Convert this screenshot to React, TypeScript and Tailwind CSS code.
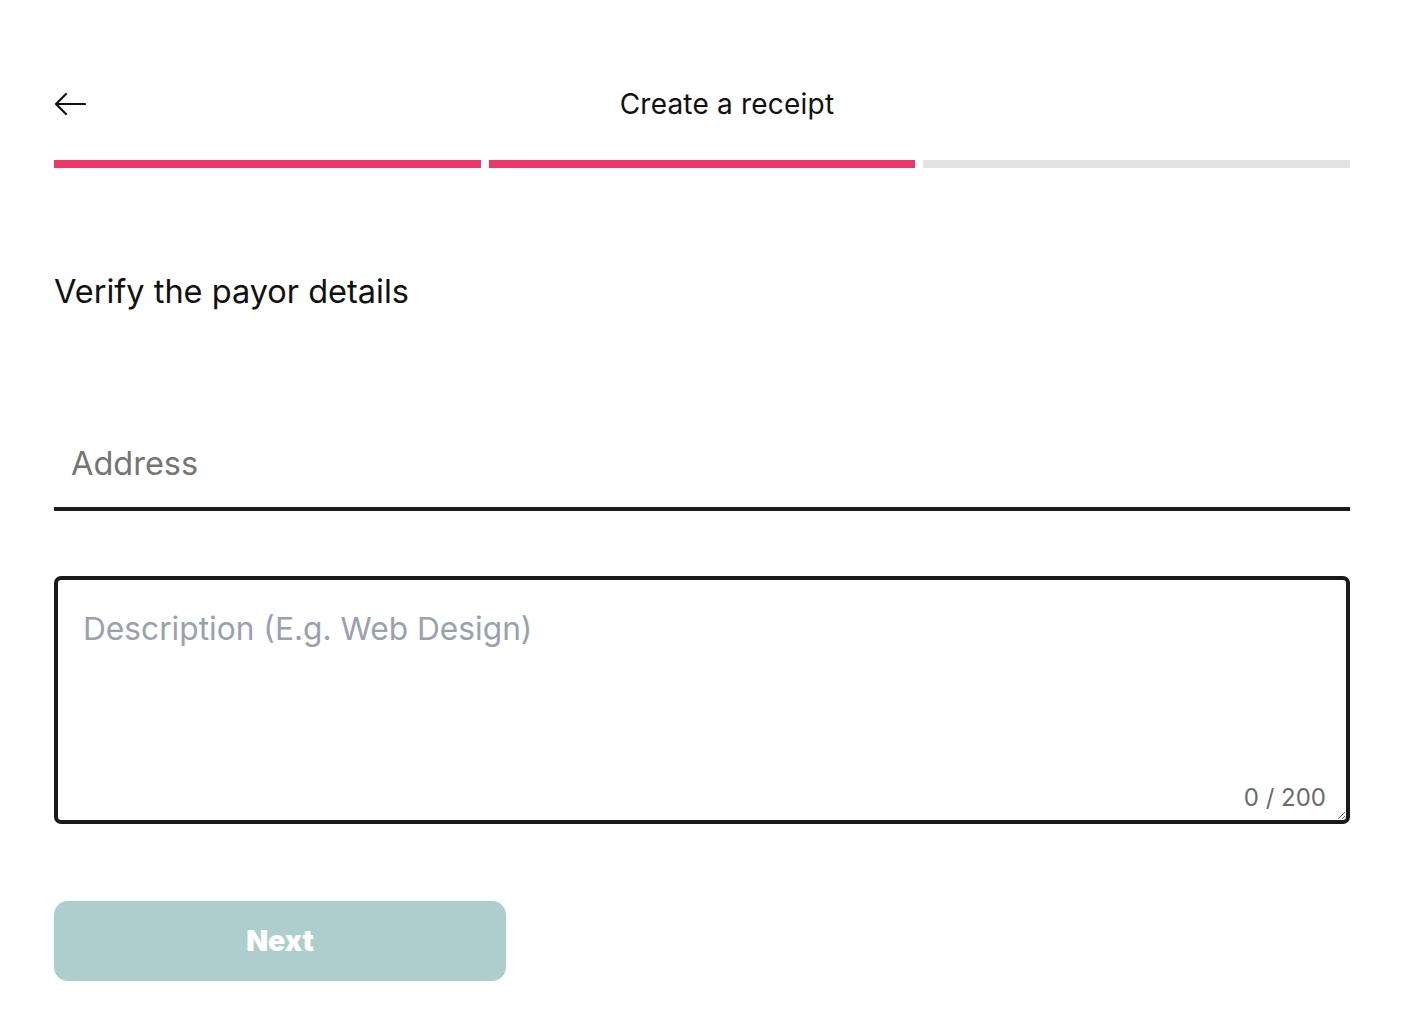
import { useState } from "react";

export default function App(): JSX.Element {
  const [address, setAddress] = useState("");
  const [description, setDescription] = useState("");

  return (
    <div className="min-h-screen bg-white font-['Inter','Noto_Sans',sans-serif] text-[#111]">
      <div className="ml-[54px] w-[1296px] pt-[84px]">
        <div className="relative flex h-[40px] items-center justify-center">
          <button className="absolute left-0 top-[4px] flex h-[32px] w-[34px] items-center">
            <svg width="32" height="24" viewBox="0 0 32 24" fill="none">
              <path
                d="M31 12H2M12 2L2 12l10 10"
                stroke="#111"
                strokeWidth="2.2"
                strokeLinecap="round"
                strokeLinejoin="round"
              />
            </svg>
          </button>
          <h1 className="ml-[50px] text-[28px] font-normal tracking-[0.2px]">Create a receipt</h1>
        </div>

        <div className="mt-[36px] flex gap-2">
          <div className="h-2 flex-1 bg-[#ee3768]" />
          <div className="h-2 flex-1 bg-[#ee3768]" />
          <div className="h-2 flex-1 bg-[#e3e3e3]" />
        </div>

        <h2 className="mt-[105px] text-[32.5px] font-normal leading-[38px]">Verify the payor details</h2>

        <input
          type="text"
          value={address}
          onChange={(e) => setAddress(e.target.value)}
          placeholder="Address"
          className="mt-[120px] block h-[80px] w-full border-b-[4px] border-[#1a1a1a] px-[17px] pb-[12px] text-[32.5px] outline-none placeholder:text-[#757575]"
        />

        <div className="relative mt-[65px]">
          <textarea
            value={description}
            maxLength={200}
            onChange={(e) => setDescription(e.target.value)}
            placeholder="Description (E.g. Web Design)"
            className="block h-[248px] w-full rounded-[7px] border-[4px] border-[#1a1a1a] px-[25px] pt-[29px] text-[31.7px] leading-[40px] outline-none placeholder:text-[#9aa1ad]"
          />
          <span className="pointer-events-none absolute bottom-[8px] right-[24px] text-[24px] text-[#6b6b6b]">
            {description.length} / 200
          </span>
        </div>

        <button className="mt-[77px] flex h-[80px] w-[452px] items-center justify-center rounded-[14px] bg-[#aecdcd] text-[28.5px] font-black text-white">
          Next
        </button>
      </div>
    </div>
  );
}
